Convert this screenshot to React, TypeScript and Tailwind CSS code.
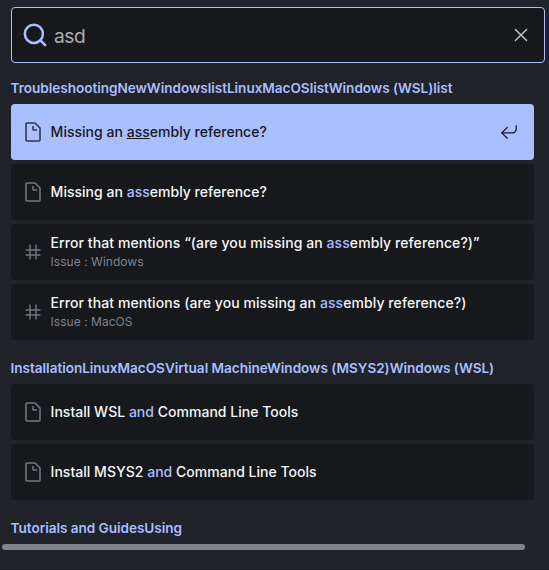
import type { ReactNode } from "react";

function DocIcon() {
  return (
    <svg width="20" height="20" viewBox="0 0 20 20" fill="none" stroke="currentColor" strokeWidth="1.6" strokeLinejoin="round">
      <path d="M17 6v12c0 .52-.2 1-1 1H4c-.7 0-1-.33-1-1V2c0-.55.42-1 1-1h8l5 5zM14 8h-3.13c-.51 0-.87-.34-.87-.87V4" />
    </svg>
  );
}

function HashIcon() {
  return (
    <svg width="20" height="20" viewBox="0 0 20 20" fill="none" stroke="currentColor" strokeWidth="1.4" strokeLinecap="round" strokeLinejoin="round">
      <path d="M13 13h4-4V8H7v5h6v4-4H7V8H3h4V3v5h6V3v5h4-4v5zm-6 0v4-4H3h4z" />
    </svg>
  );
}

function EnterIcon() {
  return (
    <svg width="18" height="18" viewBox="0 0 20 20" fill="none" stroke="currentColor" strokeWidth="1.4" strokeLinecap="round" strokeLinejoin="round">
      <path d="M18 3v4c0 2-2 4-4 4H2" />
      <path d="M8 17l-6-6 6-6" />
    </svg>
  );
}

function Mark({ active, children }: { active?: boolean; children: ReactNode }) {
  return <span className={active ? "underline" : "text-[#aabeff]"}>{children}</span>;
}

function Heading({ children }: { children: ReactNode }) {
  return (
    <h2 className="-ml-[0.4px] h-8 whitespace-nowrap text-[13.6px] leading-8 font-semibold tracking-[-0.045px] text-[#a9bdff]">{children}</h2>
  );
}

type HitProps = { hash?: boolean; active?: boolean; path?: string; children: ReactNode };

function Hit({ hash, active, path, children }: HitProps) {
  return (
    <li className={`flex h-14 items-center rounded pl-3 pr-4 ${active ? "bg-[#aabfff] text-[#17181c]" : "bg-[#17181b] text-[#f5f6f7]"}`}>
      <span className={active ? "text-[#34374b]" : "text-[#737481]"}>{hash ? <HashIcon /> : <DocIcon />}</span>
      <div className="ml-[7.6px] flex grow flex-col whitespace-nowrap">
        <span className={`text-[14px] leading-[18px] font-medium ${path ? "tracking-[0.08px]" : "tracking-[0.02px]"}`}>{children}</span>
        {path && <span className="mt-px text-xs leading-[18px] tracking-[0.03px] text-[#7f8290]">{path}</span>}
      </div>
      {active && <EnterIcon />}
    </li>
  );
}

export default function App() {
  return (
    <div className="h-[570px] w-[549px] overflow-hidden bg-[#20232a] pt-[7px] font-['Inter',sans-serif]">
      <div className="ml-[11px] flex h-14 w-[534px] items-center rounded border border-[#aabfff] bg-[#17181b] pl-[11px] pr-3">
        <svg width="24" height="24" viewBox="0 0 20 20" fill="none" stroke="#aabfff" strokeWidth="2.1" strokeLinecap="round" strokeLinejoin="round">
          <path d="M14.386 14.386l4.0877 4.0877-4.0877-4.0877c-2.9418 2.9419-7.7115 2.9419-10.6533 0-2.9419-2.9418-2.9419-7.7115 0-10.6533 2.9418-2.9419 7.7115-2.9419 10.6533 0 2.9419 2.9418 2.9419 7.7115 0 10.6533z" />
        </svg>
        <span className="ml-[7px] mt-0.5 grow text-[19.2px] leading-6 tracking-[-0.5px] text-[#acadaf]">asd</span>
        <svg width="22" height="22" viewBox="0 0 20 20" fill="none" stroke="#c4c6cb" strokeWidth="1.3" strokeLinecap="round" strokeLinejoin="round">
          <path d="M10 10l5.09-5.09L10 10l5.09 5.09L10 10zm0 0L4.91 4.91 10 10l-5.09 5.09L10 10z" />
        </svg>
      </div>

      <div className="ml-[11px] w-[523px] pt-[9px]">
        <section>
          <Heading>TroubleshootingNewWindowslistLinuxMacOSlistWindows (WSL)list</Heading>
          <ul className="flex flex-col gap-1">
            <Hit active>Missing an <Mark active>ass</Mark>embly reference?</Hit>
            <Hit>Missing an <Mark>ass</Mark>embly reference?</Hit>
            <Hit hash path="Issue : Windows">Error that mentions “(are you missing an <Mark>ass</Mark>embly reference?)”</Hit>
            <Hit hash path="Issue : MacOS">Error that mentions (are you missing an <Mark>ass</Mark>embly reference?)</Hit>
          </ul>
        </section>
        <section className="mt-3">
          <Heading>InstallationLinuxMacOSVirtual MachineWindows (MSYS2)Windows (WSL)</Heading>
          <ul className="flex flex-col gap-1">
            <Hit>Install WSL <Mark>and</Mark> Command Line Tools</Hit>
            <Hit>Install MSYS2 <Mark>and</Mark> Command Line Tools</Hit>
          </ul>
        </section>
        <section className="mt-3">
          <Heading>Tutorials and GuidesUsing</Heading>
        </section>
      </div>
      <div className="ml-[2px] h-1.5 w-[523px] rounded-full bg-[#7f838c]" />
      <div className="mt-[19px] h-px bg-[#17181b]" />
    </div>
  );
}
